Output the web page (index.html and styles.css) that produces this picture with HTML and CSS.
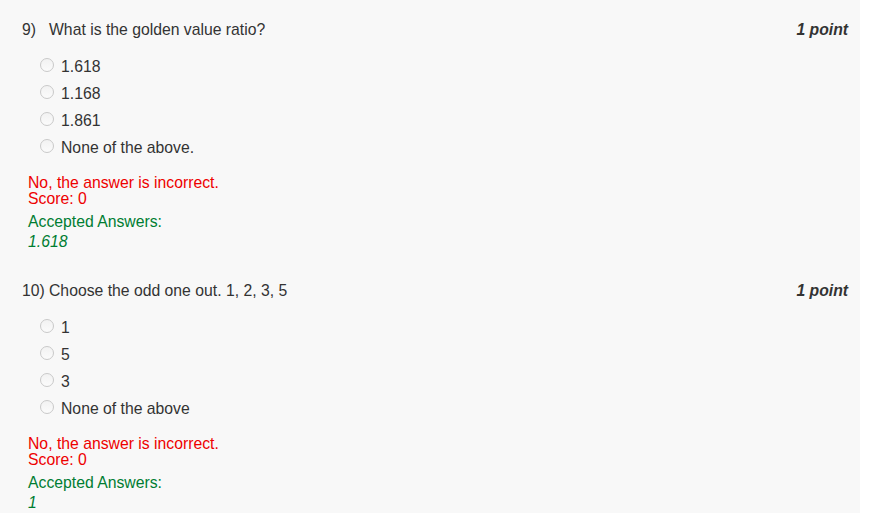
FILE: index.html
```html
<!DOCTYPE html>
<html>
<head>
<meta charset="utf-8">
<link rel="stylesheet" href="styles.css">
</head>
<body>
<div class="panel">
  <div class="question">
    <div class="q-head">
      <div class="q-title"><span class="q-num">9)</span><span>What is the golden value ratio?</span></div>
      <div class="q-points">1 point</div>
    </div>
    <ul class="options">
      <li class="option"><span class="radio"></span><span>1.618</span></li>
      <li class="option"><span class="radio"></span><span>1.168</span></li>
      <li class="option"><span class="radio"></span><span>1.861</span></li>
      <li class="option"><span class="radio"></span><span>None of the above.</span></li>
    </ul>
    <div class="feedback">
      <div class="wrong">No, the answer is incorrect.</div>
      <div class="wrong">Score: 0</div>
      <div class="accepted">Accepted Answers:</div>
      <div class="answer">1.618</div>
    </div>
  </div>
  <div class="question">
    <div class="q-head">
      <div class="q-title"><span class="q-num">10)</span><span>Choose the odd one out. 1, 2, 3, 5</span></div>
      <div class="q-points">1 point</div>
    </div>
    <ul class="options">
      <li class="option"><span class="radio"></span><span>1</span></li>
      <li class="option"><span class="radio"></span><span>5</span></li>
      <li class="option"><span class="radio"></span><span>3</span></li>
      <li class="option"><span class="radio"></span><span>None of the above</span></li>
    </ul>
    <div class="feedback">
      <div class="wrong">No, the answer is incorrect.</div>
      <div class="wrong">Score: 0</div>
      <div class="accepted">Accepted Answers:</div>
      <div class="answer">1</div>
    </div>
  </div>
</div>
</body>
</html>
```
FILE: styles.css
```css
html, body {
  margin: 0;
  padding: 0;
  background: #ffffff;
}
body {
  font-family: "Liberation Sans", Arial, sans-serif;
  font-size: 15.75px;
  color: #333333;
  overflow: hidden;
  height: 513px;
}
.panel {
  width: 860px;
  background: #f8f8f8;
  padding: 22px 12px 40px 22px;
  box-sizing: border-box;
  min-height: 513px;
}
.question {
  margin-bottom: 33px;
}
.q-head {
  display: flex;
  justify-content: space-between;
  line-height: 16px;
}
.q-num {
  display: inline-block;
  width: 27px;
}
.q-points {
  font-weight: bold;
  font-style: italic;
}
.options {
  list-style: none;
  margin: 14px 0 0 18px;
  padding: 0;
}
.option {
  display: flex;
  align-items: center;
  height: 27px;
  gap: 7px;
}
.radio {
  width: 14px;
  height: 14px;
  box-sizing: border-box;
  border: 1px solid #c9c9c9;
  border-radius: 50%;
  background: linear-gradient(#f2f2f2, #fbfbfb);
  margin-top: -1px;
}
.option span + span {
  margin-top: 2px;
}
.feedback {
  margin: 15px 0 0 6px;
  line-height: 16px;
}
.wrong {
  color: #ee0000;
}
.accepted {
  color: #007d32;
  margin-top: 7px;
}
.answer {
  color: #007d32;
  font-style: italic;
  margin-top: 4px;
}
```
